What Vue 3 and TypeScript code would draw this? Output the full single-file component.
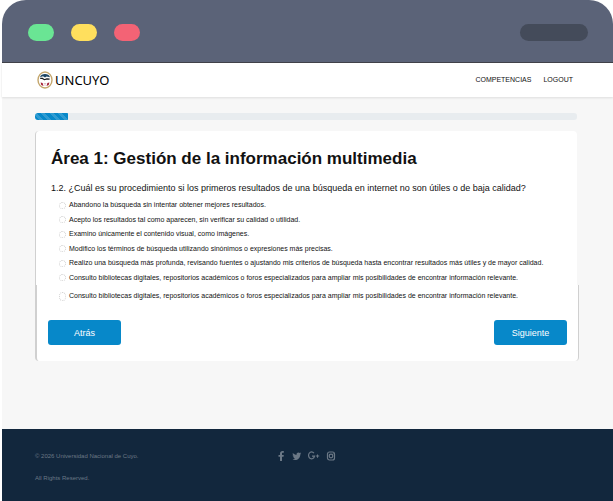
<script setup lang="ts">
import { ref } from 'vue'

const progress = ref<number>(6)
const selected = ref<number | null>(null)

const options: string[] = [
  'Abandono la búsqueda sin intentar obtener mejores resultados.',
  'Acepto los resultados tal como aparecen, sin verificar su calidad o utilidad.',
  'Examino únicamente el contenido visual, como imágenes.',
  'Modifico los términos de búsqueda utilizando sinónimos o expresiones más precisas.',
  'Realizo una búsqueda más profunda, revisando fuentes o ajustando mis criterios de búsqueda hasta encontrar resultados más útiles y de mayor calidad.',
  'Consulto bibliotecas digitales, repositorios académicos o foros especializados para ampliar mis posibilidades de encontrar información relevante.',
]
const lastOption = options[5]
</script>

<template>
  <div class="window">
    <div class="chrome">
      <div class="lights">
        <span class="light green"></span>
        <span class="light yellow"></span>
        <span class="light red"></span>
      </div>
      <span class="handle"></span>
    </div>

    <header class="topbar">
      <a class="brand" href="#">
        <svg class="crest" viewBox="0 0 16 18" aria-hidden="true">
          <ellipse cx="8" cy="9" rx="7" ry="8" fill="#fff" stroke="#c4a66c" stroke-width="1.4" />
          <path d="M3 6.200C4 1.800 12 1.800 13 6.200L9.600 5.400 8 6.500 6 5.300Z" fill="#1d4563" />
          <path d="M3.200 7.400h2.200l2 1.300 2.400-.8 2.800.2" fill="none" stroke="#15191d" stroke-width="1.200" />
          <path d="M3.600 11.500l2 .5.900 3-2.200-.9ZM12.400 11.500l-2 .5-.9 3 2.200-.9Z" fill="#a51f38" />
          <path d="M6.700 12.500h2.600M8 12v3" stroke="#d9b5bd" stroke-width=".7" />
        </svg>
        <span>UNCUYO</span>
      </a>
      <nav class="menu">
        <a href="#">COMPETENCIAS</a>
        <a href="#">LOGOUT</a>
      </nav>
    </header>

    <main class="content">
      <div class="track" role="progressbar" :aria-valuenow="progress" aria-valuemin="0" aria-valuemax="100">
        <div class="bar" :style="{ width: progress + '%' }"></div>
      </div>

      <form class="card" @submit.prevent>
        <div class="upper">
          <h1>Área 1: Gestión de la información multimedia</h1>
          <p id="question" class="question">1.2. ¿Cuál es su procedimiento si los primeros resultados de una búsqueda en internet no son útiles o de baja calidad?</p>
          <div class="options" role="radiogroup" aria-labelledby="question">
            <label v-for="(text, i) in options" :key="i" class="option">
              <input v-model="selected" type="radio" name="answer" :value="i" />
              <span>{{ text }}</span>
            </label>
          </div>
        </div>
        <div class="lower">
          <label class="option tall">
            <input v-model="selected" type="radio" name="answer" :value="6" />
            <span>{{ lastOption }}</span>
          </label>
          <div class="actions">
            <button type="button">Atrás</button>
            <button type="submit">Siguiente</button>
          </div>
        </div>
      </form>
    </main>

    <footer class="footer">
      <div class="legal">
        <p>© 2026 Universidad Nacional de Cuyo.</p>
        <p>All Rights Reserved.</p>
      </div>
      <div class="social">
        <a href="#" aria-label="Facebook">
          <svg viewBox="0 0 10 10"><path d="M4 10V5.800H2.500V4H4V2.600C4 .9 5 0 6.500 0H7.800v1.700H6.900C6.100 1.700 6 2.100 6 2.700V4h1.800l-.3 1.800H6V10Z" /></svg>
        </a>
        <a href="#" aria-label="Twitter">
          <svg viewBox="0 0 10 10"><path d="M9.200 2.300c-.3.200-.6.200-1 .3.400-.2.600-.5.800-1-.4.200-.8.400-1.200.5a1.800 1.800 0 0 0-3.100 1.700C3.100 3.700 1.800 3 .9 1.900c-.5.800-.2 1.900.6 2.500-.3 0-.6-.1-.8-.2 0 .9.600 1.600 1.500 1.800-.3.100-.6.100-.8 0 .2.700.9 1.300 1.700 1.300C2.300 8 1.400 8.300.4 8.200 3.900 10.400 8.300 7.900 8.300 3.400c.3-.3.700-.6.900-1.100Z" /></svg>
        </a>
        <a href="#" aria-label="Google Plus">
          <svg class="wide" viewBox="0 0 12 10"><path d="M5.900 2.200A3 3.500 0 1 0 6.500 5.200H4" class="line" /><path d="M9 3.500h1v1h1.200v1H10v1.200H9V5.500H7.800v-1H9Z" /></svg>
        </a>
        <a href="#" aria-label="Instagram">
          <svg viewBox="0 0 10 10"><rect x="1.500" y="1" width="7" height="8" rx="2" class="line" /><circle cx="5" cy="5" r="1.800" class="line" /><circle cx="7.200" cy="2.700" r=".5" /></svg>
        </a>
      </div>
    </footer>
  </div>
</template>

<style>
body {
  margin: 0;
  background: #fff;
}
</style>

<style scoped>
* {
  box-sizing: border-box;
}
.window {
  display: flex;
  flex-direction: column;
  min-height: 100vh;
  margin-left: 2px;
  background: linear-gradient(#fff 40px, #f7f7f7 40px);
  font-family: "Liberation Sans", Arial, sans-serif;
  color: #111;
}
.chrome {
  display: flex;
  align-items: center;
  justify-content: space-between;
  height: 63px;
  padding: 2px 25px 0 26px;
  background: #5b6378;
  border-bottom: 1px solid #34353d;
  border-radius: 24px 24px 0 0;
}
.lights {
  display: flex;
  gap: 17px;
}
.light {
  width: 26px;
  height: 17px;
  border-radius: 9px;
}
.green { background: #6ae594; }
.yellow { background: #ffdf5d; }
.red { background: #f36375; }
.handle {
  width: 68px;
  height: 17px;
  border-radius: 9px;
  background: #444b5a;
}
.topbar {
  display: flex;
  align-items: center;
  justify-content: space-between;
  height: 34px;
  padding: 0 40px 0 35px;
  background: #fff;
  box-shadow: 0 1px 2px #ddd;
}
a {
  color: inherit;
  text-decoration: none;
}
.brand {
  display: flex;
  align-items: center;
  gap: 2px;
  font: 13px/18px "Noto Sans", sans-serif;
  color: #000;
}
.crest {
  width: 16px;
  height: 18px;
}
.menu {
  display: flex;
  gap: 12px;
  font-size: 7px;
  line-height: 10px;
}
.content {
  flex: 1;
  padding: 16px 36px 24px 33px;
}
.track {
  height: 7px;
  overflow: hidden;
  border-radius: 3px;
  background: #e8ecef;
}
.bar {
  height: 100%;
  background: repeating-linear-gradient(45deg, #0788c9 0 3px, #309bd1 3px 6px);
}
.card {
  margin-top: 11px;
}
.upper {
  min-height: 154px;
  padding: 17px 15px 0;
  background: #fff;
  border-left: 1px solid #d0d0d0;
  border-radius: 4px 4px 0 0;
}
h1 {
  margin: 0;
  font-size: 17px;
  line-height: 22px;
  white-space: nowrap;
}
.question {
  margin: 12px 0 4px;
  font-size: 9px;
  line-height: 12px;
  white-space: nowrap;
}
.options {
  display: grid;
  grid-auto-rows: 1fr;
  min-height: 87px;
}
.option {
  display: flex;
  align-items: center;
  gap: 3px;
  padding-left: 8px;
  font-size: 7px;
  line-height: 10px;
  white-space: nowrap;
}
input {
  appearance: none;
  flex: none;
  width: 7px;
  height: 7px;
  margin: 0;
  border: 1px dotted #d0d0d0;
  border-radius: 50%;
}
input:checked {
  background: #0788c9;
}
.lower {
  margin-right: -2px;
  padding: 3px 11px 16px;
  background: #fff;
  border: solid #d0d0d0;
  border-width: 0 1px 0 2px;
  border-radius: 0 0 4px 4px;
}
.tall {
  height: 16px;
  padding-left: 11px;
}
.tall input {
  height: 9px;
}
.actions {
  display: flex;
  justify-content: space-between;
  margin-top: 16px;
}
button {
  width: 73px;
  height: 25px;
  padding: 0;
  border: 0;
  border-radius: 3px;
  background: #0788c9;
  color: #fff;
  font: 9px "Liberation Sans", Arial, sans-serif;
}
.footer {
  display: grid;
  grid-template-columns: 1fr auto 1fr;
  height: 72px;
  padding: 20px 33px 0;
  background: #12273d;
  color: #6b7886;
}
.legal {
  font-size: 6px;
  line-height: 14px;
}
.legal p {
  margin: 0 0 8px;
}
.social {
  display: flex;
  gap: 6px;
  padding: 2px 3px 0 0;
}
.social svg {
  display: block;
  width: 10px;
  height: 10px;
  fill: #6b7886;
}
.social .wide {
  width: 12px;
}
.social .line {
  fill: none;
  stroke: #6b7886;
  stroke-width: 1.2;
}
</style>
